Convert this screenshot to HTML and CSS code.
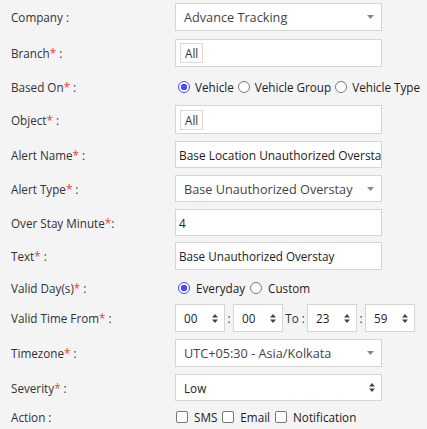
FILE: index.html
```html
<!DOCTYPE html>
<html>
<head>
<meta charset="utf-8">
<link rel="stylesheet" href="styles.css">
</head>
<body>
<div class="form">
  <div class="row mb8">
    <div class="label">Company :</div>
    <div class="box chosen tall"><span class="val">Advance Tracking</span><svg class="caret" width="7" height="4" viewBox="0 0 7 4"><path d="M0 0H7L3.5 4Z"/></svg></div>
  </div>
  <div class="row">
    <div class="label">Branch<span class="req">*</span> :</div>
    <div class="box tags tall"><span class="tag">All</span></div>
  </div>
  <div class="row opts">
    <div class="label">Based On<span class="req">*</span> :</div>
    <div class="choices tight">
      <span class="radio on"></span><span class="opt">Vehicle</span>
      <span class="radio"></span><span class="opt">Vehicle Group</span>
      <span class="radio"></span><span class="opt">Vehicle Type</span>
    </div>
  </div>
  <div class="row">
    <div class="label">Object<span class="req">*</span> :</div>
    <div class="box tags tall2"><span class="tag">All</span></div>
  </div>
  <div class="row">
    <div class="label">Alert Name<span class="req">*</span> :</div>
    <div class="box input wide"><span class="val">Base Location Unauthorized Overstay</span></div>
  </div>
  <div class="row">
    <div class="label">Alert Type<span class="req">*</span> :</div>
    <div class="box chosen"><span class="val">Base Unauthorized Overstay</span><svg class="caret" width="7" height="4" viewBox="0 0 7 4"><path d="M0 0H7L3.5 4Z"/></svg></div>
  </div>
  <div class="row mb6">
    <div class="label">Over Stay Minute<span class="req">*</span>:</div>
    <div class="box input"><span class="val">4</span></div>
  </div>
  <div class="row">
    <div class="label">Text<span class="req">*</span> :</div>
    <div class="box input tall"><span class="val">Base Unauthorized Overstay</span></div>
  </div>
  <div class="row days">
    <div class="label">Valid Day(s)<span class="req">*</span> :</div>
    <div class="choices">
      <span class="radio on"></span><span class="opt">Everyday</span>
      <span class="radio"></span><span class="opt">Custom</span>
    </div>
  </div>
  <div class="row">
    <div class="label">Valid Time From<span class="req">*</span> :</div>
    <div class="times">
      <div class="box sel time"><span class="val">00</span><svg class="spin" width="6" height="9" viewBox="0 0 6 9"><path d="M0 3.5L3 0L6 3.5ZM0 5.5H6L3 9Z"/></svg></div>
      <span class="sep">:</span>
      <div class="box sel time"><span class="val">00</span><svg class="spin" width="6" height="9" viewBox="0 0 6 9"><path d="M0 3.5L3 0L6 3.5ZM0 5.5H6L3 9Z"/></svg></div>
      <span class="to">To :</span>
      <div class="box sel time"><span class="val">23</span><svg class="spin" width="6" height="9" viewBox="0 0 6 9"><path d="M0 3.5L3 0L6 3.5ZM0 5.5H6L3 9Z"/></svg></div>
      <span class="sep">:</span>
      <div class="box sel time"><span class="val">59</span><svg class="spin" width="6" height="9" viewBox="0 0 6 9"><path d="M0 3.5L3 0L6 3.5ZM0 5.5H6L3 9Z"/></svg></div>
    </div>
  </div>
  <div class="row">
    <div class="label">Timezone<span class="req">*</span> :</div>
    <div class="box chosen tall"><span class="val">UTC+05:30 - Asia/Kolkata</span><svg class="caret" width="7" height="4" viewBox="0 0 7 4"><path d="M0 0H7L3.5 4Z"/></svg></div>
  </div>
  <div class="row">
    <div class="label">Severity<span class="req">*</span> :</div>
    <div class="box sel"><span class="val">Low</span><svg class="spin" width="6" height="9" viewBox="0 0 6 9"><path d="M0 3.5L3 0L6 3.5ZM0 5.5H6L3 9Z"/></svg></div>
  </div>
  <div class="row actions">
    <div class="label">Action :</div>
    <div class="choices checks">
      <span class="check"></span><span class="opt">SMS</span>
      <span class="check"></span><span class="opt">Email</span>
      <span class="check"></span><span class="opt">Notification</span>
    </div>
  </div>
</div>
</body>
</html>
```

FILE: styles.css
```css
html, body {
  margin: 0;
  padding: 0;
  background: #f4f4f4;
}
body {
  font-family: "Open Sans", "Liberation Sans", sans-serif;
  font-size: 11.7px;
  color: #333;
}
.form {
  padding: 3px 0 0 11px;
}
.row {
  display: flex;
  align-items: center;
  margin-bottom: 7px;
}
.row.mb8 { margin-bottom: 8px; }
.row.mb6 { margin-bottom: 6px; }
.row.opts { height: 24px; padding-top: 1px; box-sizing: border-box; }
.row.days { height: 20px; padding-top: 1px; box-sizing: border-box; }
.row.actions { height: 18px; }
.label {
  width: 164px;
  flex: none;
  color: #333;
  white-space: nowrap;
}
.req { color: #f03c3c; }
.box {
  box-sizing: border-box;
  width: 207px;
  height: 27px;
  background: #fff;
  border: 1px solid #d5d5d5;
  display: flex;
  align-items: center;
  overflow: hidden;
}
.box.tall { height: 28px; }
.box.tall2 { height: 29px; }
.val { white-space: nowrap; }
.chosen {
  padding: 0 7px 0 8px;
  font-size: 12.7px;
  color: #444;
}
.chosen .val { flex: 1; }
.caret { fill: #888; flex: none; }
.tags { padding: 0 4px; }
.tag {
  box-sizing: border-box;
  height: 20px;
  line-height: 18px;
  border: 1px solid #dadada;
  padding: 0 4px;
  color: #333;
  background: #fff;
}
.input {
  padding: 0 3px;
  color: #222;
}
.input.wide { font-size: 11.9px; }
.sel {
  padding: 0 6px 0 8px;
  color: #222;
}
.sel .val { flex: 1; }
.spin { fill: #444; flex: none; }
.times {
  display: flex;
  align-items: center;
}
.time { width: 50px; height: 28px; }
.sep {
  width: 8px;
  text-align: center;
  color: #333;
}
.to {
  width: 24px;
  text-align: center;
  color: #333;
}
.choices {
  display: flex;
  align-items: center;
  padding-left: 3px;
  color: #222;
}
.radio {
  box-sizing: border-box;
  width: 12px;
  height: 12px;
  border-radius: 50%;
  border: 1px solid #7a7a7a;
  background: #fff;
  flex: none;
  margin-right: 6px;
}
.radio.on {
  border: 1.5px solid #4747ee;
  background: radial-gradient(circle, #4d4dff 0 3px, #fff 3.6px);
}
.opt { margin-right: 5px; white-space: nowrap; }
.tight .radio { margin-right: 5px; }
.tight .opt { margin-right: 4px; }
.checks { padding-left: 1px; }
.check {
  box-sizing: border-box;
  width: 12px;
  height: 12px;
  border: 1px solid #777;
  border-radius: 2px;
  background: #fff;
  flex: none;
  margin-right: 6px;
}
```
